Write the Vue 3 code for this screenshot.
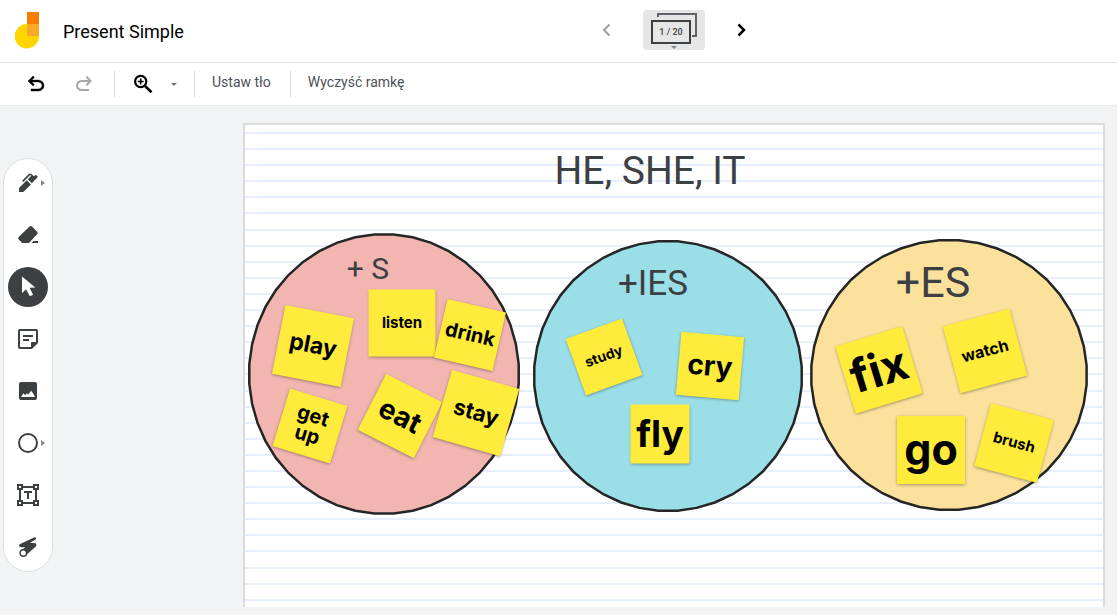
<script setup>
import { ref } from 'vue'

const activeTool = ref('Select')

const tools = [
  { name: 'Pen', more: true },
  { name: 'Eraser' },
  { name: 'Select' },
  { name: 'Sticky note' },
  { name: 'Image' },
  { name: 'Shape', more: true },
  { name: 'Text box' },
  { name: 'Laser' },
]

const SIDES = 44

// Shapes on the board are drawn as closed many-sided outlines.
function outline(rx, ry) {
  const points = []
  for (let i = 0; i < SIDES; i++) {
    const a = ((i + 0.5) * 2 * Math.PI) / SIDES
    points.push(`${(rx * Math.cos(a)).toFixed(1)},${(ry * Math.sin(a)).toFixed(1)}`)
  }
  return points.join(' ')
}

const circles = [
  { id: 'pink', x: 139, y: 249, rx: 135, ry: 140, fill: '#f2b5b0' },
  { id: 'blue', x: 423, y: 251, rx: 134, ry: 135, fill: '#9adfe7' },
  { id: 'gold', x: 704, y: 250, rx: 138, ry: 135, fill: '#fce19c' },
]

const labels = [
  { text: 'HE, SHE, IT', x: 405, y: 46, size: 39 },
  { text: '+ S', x: 123, y: 144, size: 30 },
  { text: '+IES', x: 408, y: 158, size: 35 },
  { text: '+ES', x: 688, y: 157, size: 43 },
]

const notes = [
  { text: 'play', x: 68, y: 221, side: 70, turn: 11, size: 23 },
  { text: 'listen', x: 157, y: 198, side: 67, turn: 0, size: 15 },
  { text: 'drink', x: 225, y: 210, side: 60, turn: 13, size: 20 },
  { text: 'get up', x: 65, y: 301, side: 60, turn: 17, size: 20 },
  { text: 'eat', x: 155, y: 291, side: 63, turn: 27, size: 28 },
  { text: 'stay', x: 231, y: 288, side: 70, turn: 16, size: 22 },
  { text: 'study', x: 359, y: 232, side: 60, turn: -20, size: 14 },
  { text: 'cry', x: 465, y: 241, side: 63, turn: 5, size: 28 },
  { text: 'fly', x: 415, y: 309, side: 59, turn: 0, size: 37 },
  { text: 'fix', x: 634, y: 245, side: 70, turn: -17, size: 46 },
  { text: 'watch', x: 740, y: 226, side: 69, turn: -15, size: 16 },
  { text: 'go', x: 686, y: 325, side: 68, turn: 0, size: 43 },
  { text: 'brush', x: 769, y: 318, side: 65, turn: 15, size: 15 },
]

function place(item) {
  return {
    left: item.x + 'px',
    top: item.y + 'px',
    fontSize: item.size + 'px',
  }
}

function placeNote(note) {
  return {
    ...place(note),
    width: note.side + 'px',
    height: note.side + 'px',
    transform: `translate(-50%, -50%) rotate(${note.turn}deg)`,
  }
}
</script>

<template>
  <div class="app">
    <header class="header">
      <div class="brand">
        <svg class="logo" width="24" height="37" viewBox="0 0 24 37" aria-hidden="true">
          <path d="M12 12h12v12.5A12.2 12.2 0 1 1 12 12z" fill="#ffd500" />
          <path d="M12 0h12v12H12z" fill="#f77c00" />
          <path d="M12 12h12v12H12z" fill="#f9a828" />
        </svg>
        <h1 class="title">Present Simple</h1>
      </div>
      <nav class="frames" aria-label="Frames">
        <button class="arrow" type="button" aria-label="Previous frame" disabled>
          <svg width="24" height="24" viewBox="0 0 24 24" fill="none" stroke="#9e9e9e" stroke-width="2">
            <path d="M14.5 6.500l-5.500 5.500 5.500 5.500" />
          </svg>
        </button>
        <button class="counter" type="button" aria-label="Frame bar">
          <svg width="46" height="38" viewBox="0 0 46 38" fill="none" aria-hidden="true">
            <path d="M7 6V3h38v22h-4" stroke="#5f6368" stroke-width="2" />
            <path d="M1 10h38v22H1z" stroke="#3c4043" stroke-width="2" />
            <path d="M20 35h6l-3 3z" fill="#80868b" />
          </svg>
          <span class="count">1 / 20</span>
        </button>
        <button class="arrow" type="button" aria-label="Next frame">
          <svg width="24" height="24" viewBox="0 0 24 24" fill="none" stroke="#000" stroke-width="2.500">
            <path d="M9.500 6.500l5.500 5.500-5.500 5.500" />
          </svg>
        </button>
      </nav>
    </header>

    <div class="toolbar" role="toolbar">
      <button class="icon-button" type="button" aria-label="Undo">
        <svg width="24" height="24" viewBox="0 0 24 24" fill="#000" stroke="#000" stroke-width=".4">
          <path d="M7 19v-2h7.100q1.575 0 2.738-1T18 13.500t-1.162-2.500T14.100 10H7.800l2.600 2.600L9 14 4 9l5-5 1.400 1.400L7.800 8h6.300q2.425 0 4.163 1.575T20 13.500t-1.737 3.925T14.100 19z" />
        </svg>
      </button>
      <button class="icon-button" type="button" aria-label="Redo" disabled>
        <svg width="24" height="24" viewBox="0 0 24 24" fill="#a6a6a6">
          <path transform="matrix(-1 0 0 1 24 0)" d="M7 19v-2h7.100q1.575 0 2.738-1T18 13.500t-1.162-2.500T14.100 10H7.800l2.600 2.600L9 14 4 9l5-5 1.400 1.400L7.800 8h6.300q2.425 0 4.163 1.575T20 13.500t-1.737 3.925T14.100 19z" />
        </svg>
      </button>
      <span class="divider"></span>
      <button class="icon-button zoom" type="button" aria-label="Zoom">
        <svg width="24" height="24" viewBox="0 0 24 24" fill="none" stroke="#000">
          <circle cx="9.700" cy="9.500" r="5.600" stroke-width="2.200" />
          <path d="M14 14l6.500 6.300" stroke-width="2.600" />
          <path d="M9.700 6.500v6M6.700 9.500h6" stroke-width="1.600" />
        </svg>
      </button>
      <button class="caret" type="button" aria-label="Zoom options">
        <svg width="6" height="3" viewBox="0 0 6 3"><path d="M0 0h6L3 3z" fill="#757575" /></svg>
      </button>
      <span class="divider"></span>
      <button class="text-button" type="button">Ustaw tło</button>
      <span class="divider"></span>
      <button class="text-button" type="button">Wyczyść ramkę</button>
    </div>

    <main class="workspace">
      <aside class="tools" aria-label="Tools">
        <button
          v-for="tool in tools"
          :key="tool.name"
          type="button"
          class="tool"
          :class="{ active: activeTool === tool.name }"
          :aria-label="tool.name"
          @click="activeTool = tool.name"
        >
          <svg width="24" height="24" viewBox="0 0 24 24" fill="currentColor">
            <g v-if="tool.name === 'Pen'">
              <path d="M3 17l7.800-7.800 4.200 4.200L7.200 21H3z" />
              <path d="M11.800 8.300l3.800-3.800q.8-.8 1.600 0l.8.800.900-.900q.9-.9 1.800 0l.6.600q.8.800 0 1.600l-5.500 5.700z" />
              <path d="M6.700 10.300l6.600-6.600q.9-.8 1.700 0l.8.800" fill="none" stroke="currentColor" stroke-width="1.700" />
            </g>
            <g v-else-if="tool.name === 'Eraser'">
              <path d="M13.500 3.500q1.300-1.200 2.500 0l5.200 5.200q1.200 1.200 0 2.400L13 20H6.300l-3.600-3.600q-1.200-1.200 0-2.400z" />
              <path d="M17.500 18H22v2h-6.500z" />
            </g>
            <path v-else-if="tool.name === 'Select'" d="M6 1.500v16.800l4-4 3.800 7 3.300-1.600-3.500-6.900 5.700-.2z" />
            <g v-else-if="tool.name === 'Sticky note'" fill="none" stroke="currentColor" stroke-width="2">
              <path d="M4 3h16q1 0 1 1v11.500L15.500 21H4q-1 0-1-1V4q0-1 1-1z" />
              <path d="M7 9h10M7 13h6" />
              <path d="M15.500 21v-5.500H21z" fill="currentColor" stroke-width="1" />
            </g>
            <path v-else-if="tool.name === 'Image'" fill-rule="evenodd" d="M5 3h14q2 0 2 2v14q0 2-2 2H5q-2 0-2-2V5q0-2 2-2zM5 18h14l-1.500-3-2.300-3.200-3 3.800-1.200-1.400-1.800 2-1.700-2z" />
            <circle v-else-if="tool.name === 'Shape'" cx="12" cy="12" r="9" fill="none" stroke="currentColor" stroke-width="2" />
            <g v-else-if="tool.name === 'Text box'" fill="none" stroke="currentColor" stroke-width="2">
              <path d="M7 4h10M7 20h10M4 7v10M20 7v10" />
              <path d="M2 2h4v4H2zM18 2h4v4h-4zM2 18h4v4H2zM18 18h4v4h-4z" />
              <path d="M8 9h8M12 9v7" />
            </g>
            <g v-else>
              <path d="M18.500 2.200q1.200-.3 1.500.7t-.6 1.500l-5.400 3.600h4.500q1.800.2 1.900 1.700t-1.200 2.400L9.800 20.500 4.600 16l4.700-3.800H5q-1.800-.2-1.900-1.400t1.100-1.900z" />
              <circle cx="7.300" cy="18" r="3.200" fill="#fff" stroke="currentColor" stroke-width="1.400" />
            </g>
          </svg>
          <svg v-if="tool.more" class="more" width="4" height="6" viewBox="0 0 4 6" aria-hidden="true">
            <path d="M0 0l4 3-4 3z" fill="#80868b" />
          </svg>
        </button>
      </aside>

      <section class="board" aria-label="Frame">
        <div class="paper" aria-hidden="true">
          <span v-for="n in 30" :key="n" class="rule"></span>
        </div>
        <svg
          v-for="circle in circles"
          :key="circle.id"
          class="circle"
          width="290"
          height="290"
          viewBox="-145 -145 290 290"
          :style="{ left: circle.x + 'px', top: circle.y + 'px' }"
          aria-hidden="true"
        >
          <polygon :points="outline(circle.rx, circle.ry)" :fill="circle.fill" stroke="#252525" stroke-width="2.500" />
        </svg>
        <p v-for="label in labels" :key="label.text" class="label" :style="place(label)">{{ label.text }}</p>
        <div v-for="note in notes" :key="note.text" class="note" :style="placeNote(note)">
          <span>{{ note.text }}</span>
        </div>
      </section>
    </main>
  </div>
</template>

<style>
body {
  margin: 0;
}
</style>

<style scoped>
.app {
  display: flex;
  flex-direction: column;
  min-height: 100vh;
  background: #f1f3f4;
  font-family: Roboto, "Liberation Sans", sans-serif;
}

button {
  display: flex;
  align-items: center;
  justify-content: center;
  margin: 0;
  padding: 0;
  border: 0;
  background: none;
  color: inherit;
  font: inherit;
}

.header {
  display: flex;
  align-items: center;
  height: 62px;
  border-bottom: 1px solid #e0e0e0;
  background: #fff;
}

.brand {
  display: flex;
  flex: 0 0 572px;
  align-items: center;
  gap: 24px;
  padding-left: 15px;
}

.title {
  margin: 2px 0 0;
  color: #000;
  font-size: 18px;
  font-weight: 400;
  line-height: 24px;
}

.logo {
  margin-bottom: 2px;
}

.frames {
  display: flex;
  align-items: center;
  gap: 16px;
  margin-bottom: 2px;
}

.arrow {
  width: 40px;
  height: 40px;
}

.counter {
  position: relative;
  width: 62px;
  height: 40px;
  border-radius: 4px;
  background: #e6e6e6;
}

.count {
  position: absolute;
  top: 12px;
  left: 8px;
  width: 40px;
  color: #3c4043;
  font-size: 9px;
  font-weight: 500;
  line-height: 20px;
  text-align: center;
}

.toolbar {
  display: flex;
  align-items: center;
  height: 42px;
  padding-left: 12px;
  border-bottom: 1px solid #e8eaed;
  background: #fff;
}

.icon-button {
  width: 48px;
  height: 42px;
}

.divider {
  width: 1px;
  height: 26px;
  margin-left: 6px;
  background: #dadce0;
}

.zoom {
  margin-left: 4px;
}

.caret {
  width: 14px;
  height: 42px;
  margin-right: 7px;
}

.text-button {
  padding: 0 13px 4px 17px;
  color: #4d5156;
  font-size: 14px;
  line-height: 20px;
}

.workspace {
  display: flex;
  flex: 1;
  align-items: stretch;
  padding: 17px 12px 8px 3px;
}

.tools {
  display: flex;
  flex: none;
  flex-direction: column;
  align-self: flex-start;
  gap: 12px;
  margin: 35px 190px 0 0;
  padding: 4px;
  border: 1px solid #dadce0;
  border-radius: 25px;
  background: #fff;
}

.tool {
  position: relative;
  width: 40px;
  height: 40px;
  border-radius: 50%;
  color: #3c4043;
}

.tool.active {
  background: #3c4043;
  color: #fff;
}

.more {
  position: absolute;
  top: 17px;
  right: 3px;
}

.board {
  position: relative;
  flex: 1;
  overflow: hidden;
  border: 2px solid #dadce0;
  border-bottom: 0;
  background: #fff;
}

.paper {
  display: flex;
  flex-direction: column;
  justify-content: space-between;
  box-sizing: border-box;
  height: 100%;
  padding: 7px 0 6px;
}

.rule {
  height: 2px;
  background: #e6effb;
}

.circle,
.label,
.note {
  position: absolute;
  transform: translate(-50%, -50%);
}

.label {
  margin: 0;
  color: #3c4043;
  line-height: 1;
  white-space: nowrap;
}

.note {
  display: flex;
  align-items: center;
  justify-content: center;
  background: #ffeb3b;
  box-shadow: 0 1px 3px rgba(0, 0, 0, 0.35);
  color: #000;
  font-family: Inter, "Open Sans", sans-serif;
  font-weight: 700;
  line-height: 1;
  text-align: center;
}

.note span {
  width: min-content;
  padding-bottom: 2px;
}
</style>
